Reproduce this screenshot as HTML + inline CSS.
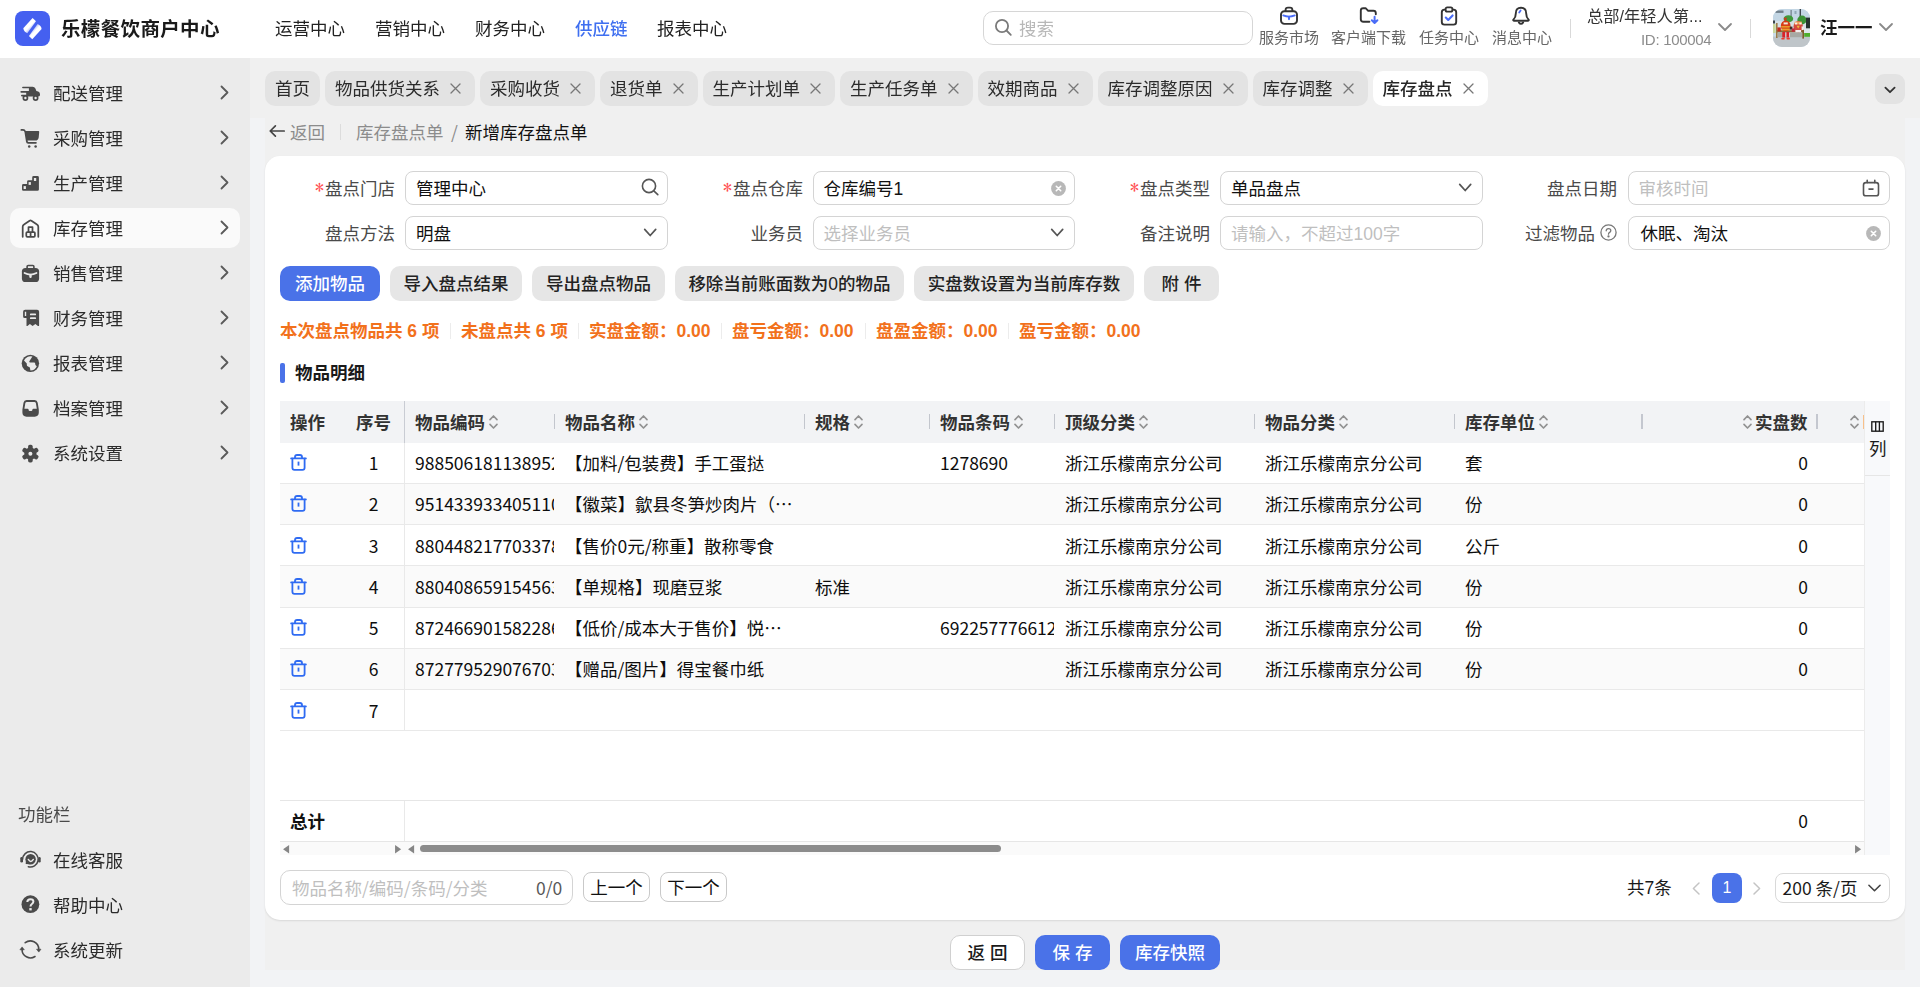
<!DOCTYPE html>
<html lang="zh-CN">
<head>
<meta charset="utf-8">
<title>乐檬餐饮商户中心</title>
<style>
*{box-sizing:border-box;margin:0;padding:0}
html,body{width:1920px;height:987px;overflow:hidden}
body{position:relative;background:#f2f3f5;font-family:"Liberation Sans","Noto Sans CJK SC",sans-serif;font-size:17.5px;color:#1f1f1f;line-height:1}
.a{position:absolute;white-space:nowrap}
.n{font-family:"Noto Sans CJK SC","Liberation Sans",sans-serif}
svg{display:block;overflow:visible;position:absolute}
/* header */
#hdbg{position:absolute;left:0;top:0;width:1920px;height:58px;background:#fff}
#hd{position:absolute;left:0;top:0;width:1920px;height:58px;will-change:transform}
#logo{position:absolute;left:15px;top:11px;width:35px;height:35px;border-radius:8px;background:#4560f0;overflow:hidden}
#title{position:absolute;left:61px;top:15px;font-size:19.5px;letter-spacing:.35px;line-height:26px;font-weight:700;color:#1a1a1a;white-space:nowrap;font-family:"Noto Sans CJK SC",sans-serif}
.nav{position:absolute;top:16px;line-height:26px;font-size:17.5px;color:#222;white-space:nowrap}
.nav.on{color:#3f6ff0;font-weight:500}
#srch{position:absolute;left:983px;top:11px;width:270px;height:34px;border:1px solid #d6d6d6;border-radius:10px;background:#fff}
.hl{position:absolute;top:29px;font-size:15px;line-height:18px;color:#666;white-space:nowrap}
.vd{position:absolute;width:1px;background:#d9d9d9}
/* sidebar */
#sbbg{position:absolute;left:0;top:58px;width:250px;height:929px;background:#ebebeb}
#sb{position:absolute;left:0;top:58px;width:250px;height:929px;will-change:transform}
#tabs{position:absolute;left:0;top:0;width:1920px;height:110px;will-change:transform}
.mi{position:absolute;left:10px;width:230px;height:40px;border-radius:10px}
.mi.on{background:#fafafa}
.mi .t{position:absolute;left:43px;top:8px;line-height:26px;font-size:17.5px;color:#2b2b2b;white-space:nowrap}
.mi svg.ic{left:10px;top:9px;width:22px;height:22px}
.mi svg.ch{left:209.5px;top:12px;width:9px;height:15px}
/* main */
#main{position:absolute;left:250px;top:58px;width:1670px;height:60px;background:#f0f0f0}
#main2{position:absolute;left:265px;top:117.5px;width:1640px;height:852.5px;background:#f0f0f0}
.tab{position:absolute;top:71px;height:35px;border-radius:10px;background:#e3e3e3;color:#2b2b2b;line-height:37px;padding-left:10px;white-space:nowrap;font-size:17.5px}
.tab.on{background:#fff;color:#262626;font-weight:500}
.tab svg{top:12px;width:11px;height:11px}
#panel{position:absolute;left:265px;top:155.6px;width:1640px;height:764.6px;background:#fff;border-radius:15px;box-shadow:0 1px 2px rgba(0,0,0,.1)}
.lb{position:absolute;text-align:right;width:130px;line-height:26px;color:#4a4a4a;font-size:17.5px;white-space:nowrap}
.lb i{font-style:normal;color:#ff4d4f;font-family:"IPAGothic","Liberation Sans",sans-serif;font-size:18px;display:inline-block;width:10.5px;line-height:20px;vertical-align:top;position:relative;top:1px;left:-1px}
.ip{position:absolute;width:262.5px;height:34px;border:1px solid #d4d4d4;border-radius:8px;background:#fff;line-height:34px;padding-left:10px;font-size:17.5px;color:#111;white-space:nowrap}
.ip.ph{color:#bfbfbf}
.btn{position:absolute;top:266px;height:35px;border-radius:10px;background:#e6e6e6;color:#222;font-weight:500;line-height:37px;text-align:center;font-size:17.5px;white-space:nowrap}
.btn.p{background:#4a72e8;color:#fff}
.st{position:absolute;top:318px;line-height:26px;font-weight:700;color:#f2711c;font-size:17.5px;white-space:nowrap}
/* table */
.th{position:absolute;top:401px;height:42px;line-height:42px;font-weight:700;color:#333;font-size:17.5px;white-space:nowrap;font-family:"Noto Sans CJK SC","Liberation Sans",sans-serif}
.rs{position:absolute;top:414px;width:2px;height:15px;background:#c4c7cf}
.row{position:absolute;left:280px;width:1584px;height:41px;border-bottom:1px solid #e9e9e9}
.row.ev{background:#fafafa}
.td{position:absolute;height:26px;line-height:26px;font-size:17.5px;color:#0d0d0d;white-space:nowrap;overflow:hidden;font-family:"Noto Sans CJK SC","Liberation Sans",sans-serif}
</style>
</head>
<body>
<div id="hdbg"></div><div id="hd">
<div id="logo"><svg viewBox="0 0 35 35" style="left:0;top:0;width:35px;height:35px"><defs><linearGradient id="lgA" gradientUnits="userSpaceOnUse" x1="11" y1="15" x2="16" y2="19.6"><stop offset=".45" stop-color="#fff"/><stop offset="1" stop-color="#fff" stop-opacity=".45"/></linearGradient><linearGradient id="lgB" gradientUnits="userSpaceOnUse" x1="24" y1="20.2" x2="19" y2="15.6"><stop offset=".45" stop-color="#fff"/><stop offset="1" stop-color="#fff" stop-opacity=".45"/></linearGradient></defs><path d="M17.6 6.9 L21 10.3 L12.3 22.2 Q8.7 20.6 8.3 17.3 Z" fill="url(#lgA)"/><path d="M17.3 28.3 L13.9 24.9 L22.6 13 Q26.2 14.6 26.6 17.9 Z" fill="url(#lgB)"/></svg></div>
<div id="title">乐檬餐饮商户中心</div>
<div class="nav" style="left:275px">运营中心</div>
<div class="nav" style="left:375px">营销中心</div>
<div class="nav" style="left:475px">财务中心</div>
<div class="nav on" style="left:575px">供应链</div>
<div class="nav" style="left:657px">报表中心</div>
<div id="srch"><svg viewBox="0 0 18 18" style="left:11px;top:7px;width:18px;height:18px" fill="none" stroke="#7a7a7a" stroke-width="1.8" stroke-linecap="round"><circle cx="7" cy="7" r="6.1"/><path d="M11.5 11.5 L15.8 15.9"/></svg><div class="a" style="left:35px;top:4px;line-height:26px;color:#b8b8b8">搜索</div></div>
<svg viewBox="0 0 20 20" style="left:1279px;top:6px;width:20px;height:20px" fill="none" stroke="#333" stroke-width="1.9" stroke-linejoin="round"><path d="M6.6 5.2 V4 Q6.6 1.6 9 1.6 H11 Q13.4 1.6 13.4 4 V5.2"/><rect x="2" y="5.2" width="16" height="12.7" rx="3.4"/><path d="M4.2 9.4 Q10 11.7 15.8 9.4" stroke="#4a6cf7" stroke-width="1.7" stroke-linecap="round"/><path d="M10 10.8 V13.1" stroke="#4a6cf7" stroke-width="2.1" stroke-linecap="round"/></svg>
<div class="hl" style="left:1259px">服务市场</div>
<svg viewBox="0 0 20 20" style="left:1359px;top:6px;width:20px;height:20px" fill="none" stroke="#333" stroke-width="1.9" stroke-linejoin="round" stroke-linecap="round"><path d="M10.4 15.8 H4.4 Q1.8 15.8 1.8 13.2 V4.6 Q1.8 2.2 4.2 2.2 H6.6 L9.2 4.8 H14.4 Q16.8 4.8 16.8 7.2 V8.2"/><path d="M15.6 10.8 V16.6 M12.8 14.2 L15.6 17 L18.4 14.2" stroke="#4a6cf7" stroke-width="2"/></svg>
<div class="hl" style="left:1331px">客户端下载</div>
<svg viewBox="0 0 20 20" style="left:1439px;top:6px;width:20px;height:20px" fill="none" stroke="#333" stroke-width="1.9" stroke-linejoin="round" stroke-linecap="round"><rect x="2.8" y="3.6" width="14.4" height="15" rx="2.6"/><rect x="6.6" y="1.4" width="6.8" height="4.2" rx="1.6" fill="#fff"/><path d="M6.8 11.6 L9.2 14 L13.6 9.4" stroke="#4a6cf7" stroke-width="2.1"/></svg>
<div class="hl" style="left:1419px">任务中心</div>
<svg viewBox="0 0 20 20" style="left:1511px;top:6px;width:20px;height:20px" fill="none" stroke="#333" stroke-width="1.9" stroke-linejoin="round" stroke-linecap="round"><path d="M10 1.8 Q15.2 1.8 15.2 7.4 Q15.2 11.4 17.6 13.6 Q18.2 14.6 17 14.8 H3 Q1.8 14.6 2.4 13.6 Q4.8 11.4 4.8 7.4 Q4.8 1.8 10 1.8Z"/><path d="M7.8 16.4 Q10 19.4 12.2 16.4"/><path d="M9.6 4.4 L8.2 6.6" stroke="#4a6cf7" stroke-width="1.8"/></svg>
<div class="hl" style="left:1492px">消息中心</div>
<div class="vd" style="left:1570px;top:19px;height:19px"></div>
<div class="a" style="left:1587px;top:6px;font-size:16.25px;line-height:20px;color:#333">总部/年轻人第...</div>
<div class="a" style="left:1641px;top:31px;font-size:15px;line-height:18px;color:#8c8c8c;letter-spacing:-.3px">ID: 100004</div>
<svg viewBox="0 0 14 8" style="left:1718px;top:23px;width:14px;height:8px" fill="none" stroke="#8a8a8a" stroke-width="1.8" stroke-linecap="round" stroke-linejoin="round"><path d="M1 1 L7 7 L13 1"/></svg>
<div class="vd" style="left:1750px;top:19px;height:19px"></div>
<svg viewBox="0 0 37 38" style="left:1773px;top:9px;width:37px;height:38px"><defs><clipPath id="av"><rect width="37" height="38" rx="9"/></clipPath><filter id="bl" x="-5%" y="-5%" width="110%" height="110%"><feGaussianBlur stdDeviation=".45"/></filter></defs><g clip-path="url(#av)"><rect width="37" height="38" fill="#c9dbe6"/><g filter="url(#bl)"><rect y="0" width="37" height="14" fill="#c3d6e4"/><rect x="0" y="12" width="37" height="10" fill="#d5e0e6"/><rect x="2.5" y="1.5" width="8" height="2.4" fill="#6f7f8a"/><rect x="17.6" y="1" width="1" height="7" fill="#5d6a72"/><rect x="26.6" y="0" width="1.4" height="8" fill="#3f4a50"/><rect x="21.5" y="2" width="2" height="3" fill="#8fa7b5"/><ellipse cx="15.4" cy="9.8" rx="4.8" ry="3.6" fill="#3f9a3a"/><ellipse cx="29" cy="11" rx="4.7" ry="4.4" fill="#3a9236"/><rect x="33" y="8.6" width="4" height="11" fill="#26302f"/><rect x="0" y="11.5" width="2" height="3" fill="#3a4448"/><rect x="0" y="15" width="2.6" height="9" fill="#c9d79a"/><rect x="0" y="27.6" width="37" height="10.4" fill="#bfc5c9"/><rect x="31.2" y="24" width="5.8" height="3.8" fill="#4fae2c"/><rect x="31" y="19.5" width="6" height="4.5" fill="#dfe6ea"/><rect x="3" y="21.2" width="28" height="2.2" fill="#8a6a3a"/><rect x="3" y="14" width="1.6" height="15" fill="#9a7a46"/><rect x="29.3" y="20" width="1.7" height="9.6" fill="#7d5c2c"/><rect x="5" y="23.6" width="24" height="4.6" fill="#a7a9a4"/><rect x="12.4" y="23.8" width="4.6" height="4" fill="#e8ebee"/><ellipse cx="12.7" cy="17" rx="4.9" ry="5.6" fill="#d63a16"/><rect x="8.2" y="17" width="9" height="1.6" fill="#e89a2a"/><rect x="8.6" y="19.6" width="8.2" height="1.8" fill="#e8a02e"/><rect x="10.6" y="13.4" width="4.2" height="2" fill="#f3e6d6"/><path d="M11.4 8.6 L12.4 11.6 L13.4 8.6" stroke="#d8321a" stroke-width="1.2" fill="none"/><rect x="4.4" y="18.4" width="3.4" height="4" fill="#c22a1c"/><rect x="16.8" y="17.6" width="2.6" height="3" fill="#3a2a2a"/><rect x="9.3" y="23" width="2.8" height="5.6" fill="#d8242a"/><rect x="13.4" y="23" width="2.8" height="5.6" fill="#d8242a"/><rect x="8.2" y="29" width="3.6" height="1.6" rx=".8" fill="#f0382a"/><rect x="13.4" y="29" width="3.6" height="1.6" rx=".8" fill="#f0382a"/><ellipse cx="25.2" cy="17.6" rx="4.7" ry="5.6" fill="#d4483e"/><rect x="21.6" y="12.6" width="7.2" height="2.8" fill="#f0a45a"/><rect x="22" y="13.6" width="2.2" height="1.8" fill="#f7f0ea"/><rect x="26.4" y="13.6" width="2.2" height="1.8" fill="#f7f0ea"/><path d="M23.6 16.8 L25.2 19.4 L26.8 16.8Z" fill="#e8b83a"/><rect x="22.4" y="21" width="5.6" height="2.2" fill="#f3eeee"/><rect x="18.8" y="19.4" width="3" height="3.4" fill="#c4283a"/><rect x="28.6" y="17.4" width="2.2" height="3.6" fill="#f0ece8"/></g></g></svg>
<div class="a" style="left:1820px;top:15px;line-height:26px;font-weight:700;color:#1a1a1a;font-size:17.5px">汪一一</div>
<svg viewBox="0 0 14 8" style="left:1879px;top:23px;width:14px;height:8px" fill="none" stroke="#8a8a8a" stroke-width="1.8" stroke-linecap="round" stroke-linejoin="round"><path d="M1 1 L7 7 L13 1"/></svg>
</div>
<div id="sbbg"></div><div id="sb">
<div class="mi" style="top:15px"><svg class="ic" viewBox="0 0 22 22"><path fill="#4a4a4a" d="M2.9 4.7 H12.6 Q14.6 4.7 15.4 6.6 L16.4 9 L18.2 9.6 Q20 10.3 20 12.2 V13 Q20 14.4 18.6 14.4 H1.8 Q1 14.4 1 13.6 Q1 12.8 1.8 12.8 H6.2 V10.7 H1.2 Q.4 10.7 .4 9.85 Q.4 9 1.2 9 H8.9 V6.3 H2.9 Q2.1 6.3 2.1 5.5 Q2.1 4.7 2.9 4.7Z"/><circle cx="5.4" cy="16" r="2.05" fill="#ebebeb" stroke="#4a4a4a" stroke-width="1.7"/><circle cx="15.6" cy="16" r="2.05" fill="#ebebeb" stroke="#4a4a4a" stroke-width="1.7"/></svg><div class="t">配送管理</div><svg class="ch" viewBox="0 0 9 15" fill="none" stroke="#5a5a5a" stroke-width="1.8" stroke-linecap="round" stroke-linejoin="round"><path d="M1.5 1.5 L7.5 7.5 L1.5 13.5"/></svg></div>
<div class="mi" style="top:60px"><svg class="ic" viewBox="0 0 22 22" fill="#4a4a4a"><path d="M1.3 2.1 H3 Q5.2 2.1 5.8 4.1 H18.4 Q19.3 4.1 19.2 5 L18.7 10.4 Q18.3 13.5 15.2 13.5 H7.6 L7.7 14.2 Q7.8 15 8.6 15 H16 Q16.8 15 16.8 15.85 Q16.8 16.7 16 16.7 H8.2 Q6.3 16.7 6 14.8 L4.5 5.2 Q4.3 3.8 2.9 3.8 H1.3 Q.5 3.8 .5 2.95 Q.5 2.1 1.3 2.1Z"/><circle cx="9.2" cy="19.6" r="1.25"/><circle cx="15.6" cy="19.6" r="1.25"/></svg><div class="t">采购管理</div><svg class="ch" viewBox="0 0 9 15" fill="none" stroke="#5a5a5a" stroke-width="1.8" stroke-linecap="round" stroke-linejoin="round"><path d="M1.5 1.5 L7.5 7.5 L1.5 13.5"/></svg></div>
<div class="mi" style="top:105px"><svg class="ic" viewBox="0 0 22 22"><path fill="#4a4a4a" d="M13.6 4 H17.5 Q18.9 4 18.9 5.4 V17.4 Q18.9 18.8 17.5 18.8 H3.4 Q2 18.8 2 17.4 V13.5 Q2 12.1 3.4 12.1 H7.1 V9.6 Q7.1 8.2 8.5 8.2 H12.2 V5.4 Q12.2 4 13.6 4Z"/><rect x="13.9" y="6" width="2.3" height="3" fill="#ebebeb"/><rect x="8.6" y="10.1" width="2.3" height="2.8" fill="#ebebeb"/><rect x="3.6" y="14.1" width="2.3" height="2.9" fill="#ebebeb"/></svg><div class="t">生产管理</div><svg class="ch" viewBox="0 0 9 15" fill="none" stroke="#5a5a5a" stroke-width="1.8" stroke-linecap="round" stroke-linejoin="round"><path d="M1.5 1.5 L7.5 7.5 L1.5 13.5"/></svg></div>
<div class="mi on" style="top:150px"><svg class="ic" viewBox="0 0 22 22" fill="none" stroke="#4a4a4a" stroke-width="1.75" stroke-linejoin="round" stroke-linecap="round"><path d="M2.7 19.8 V9.8 Q2.7 8.2 4 7.4 L9.6 3.7 Q10.5 3.1 11.4 3.7 L17 7.4 Q18.3 8.2 18.3 9.8 V19.8"/><rect x="6.3" y="15.1" width="8.6" height="4.7" rx="1"/><path d="M10.6 15.1 V19.8 M8.5 15.1 V10 H12.5 V15.1" stroke-linecap="butt"/></svg><div class="t">库存管理</div><svg class="ch" viewBox="0 0 9 15" fill="none" stroke="#5a5a5a" stroke-width="1.8" stroke-linecap="round" stroke-linejoin="round"><path d="M1.5 1.5 L7.5 7.5 L1.5 13.5"/></svg></div>
<div class="mi" style="top:195px"><svg class="ic" viewBox="0 0 22 22"><rect x="1.9" y="6" width="17.2" height="14" rx="3.6" fill="#4a4a4a"/><path d="M7.1 6.4 V4.6 Q7.1 3.5 8.2 3.5 H12.8 Q13.9 3.5 13.9 4.6 V6.4" fill="none" stroke="#4a4a4a" stroke-width="1.6"/><path d="M4.5 11 Q10.5 14.2 16.5 11" fill="none" stroke="#ebebeb" stroke-width="1.7" stroke-linecap="round"/><path d="M10.5 13 V14.8" fill="none" stroke="#ebebeb" stroke-width="2.4" stroke-linecap="round"/></svg><div class="t">销售管理</div><svg class="ch" viewBox="0 0 9 15" fill="none" stroke="#5a5a5a" stroke-width="1.8" stroke-linecap="round" stroke-linejoin="round"><path d="M1.5 1.5 L7.5 7.5 L1.5 13.5"/></svg></div>
<div class="mi" style="top:240px"><svg class="ic" viewBox="0 0 22 22"><path fill="#4a4a4a" fill-rule="evenodd" d="M5.1 2.8 H17.1 Q19.1 2.8 19.1 4.8 V18.4 Q19.1 19.2 18.3 19 L17.9 19 L15.4 17 L12.6 19 L9.9 17 L7.4 19 H6.5 V10.9 H4.6 Q3.1 10.9 3.1 9.4 V4.8 Q3.1 2.8 5.1 2.8Z M4.8 4.8 V9 H6.2 V4.8Z"/><path d="M10.8 7.4 H15.2 M10.8 11.2 H15.2" stroke="#ebebeb" stroke-width="1.8" stroke-linecap="round"/></svg><div class="t">财务管理</div><svg class="ch" viewBox="0 0 9 15" fill="none" stroke="#5a5a5a" stroke-width="1.8" stroke-linecap="round" stroke-linejoin="round"><path d="M1.5 1.5 L7.5 7.5 L1.5 13.5"/></svg></div>
<div class="mi" style="top:285px"><svg class="ic" viewBox="0 0 22 22"><circle cx="10.4" cy="11.35" r="8.7" fill="#4a4a4a"/><path fill="#ebebeb" d="M4.0 8.5 A7.1 7.1 0 0 1 12.4 4.5 L9.2 9.4 Q9.6 10.6 10.7 10.6 H14.2 Q15 10.6 15.2 11.6 L15.4 13 L16.8 14.2 A7.1 7.1 0 0 1 10.4 18.45 L9.9 15.5 L7.6 14.3 Q6.8 13.8 6.8 12.8 V11.5Z"/></svg><div class="t">报表管理</div><svg class="ch" viewBox="0 0 9 15" fill="none" stroke="#5a5a5a" stroke-width="1.8" stroke-linecap="round" stroke-linejoin="round"><path d="M1.5 1.5 L7.5 7.5 L1.5 13.5"/></svg></div>
<div class="mi" style="top:330px"><svg class="ic" viewBox="0 0 22 22"><path fill="#4a4a4a" fill-rule="evenodd" d="M6.6 3.1 H14.6 Q17.2 3.1 17.7 5.7 L18.7 12 Q18.8 12.6 18.8 13.2 V15.6 Q18.8 19.7 14.7 19.7 H6.5 Q2.4 19.7 2.4 15.6 V13.2 Q2.4 12.6 2.5 12 L3.5 5.7 Q4 3.1 6.6 3.1Z M6.9 4.9 Q5.5 4.9 5.3 6.3 L4.4 11.8 H7.6 Q8.6 11.8 8.6 12.8 Q8.6 14 9.8 14 H11.2 Q12.4 14 12.4 12.8 Q12.4 11.8 13.4 11.8 H16.8 L15.9 6.3 Q15.7 4.9 14.3 4.9Z"/></svg><div class="t">档案管理</div><svg class="ch" viewBox="0 0 9 15" fill="none" stroke="#5a5a5a" stroke-width="1.8" stroke-linecap="round" stroke-linejoin="round"><path d="M1.5 1.5 L7.5 7.5 L1.5 13.5"/></svg></div>
<div class="mi" style="top:375px"><svg class="ic" viewBox="0 0 22 22"><g fill="#4a4a4a" transform="translate(10.4 11.65)"><circle r="6.1"/><rect x="-2.3" y="-8.8" width="4.6" height="17.6" rx="1.7"/><rect x="-2.3" y="-8.8" width="4.6" height="17.6" rx="1.7" transform="rotate(60)"/><rect x="-2.3" y="-8.8" width="4.6" height="17.6" rx="1.7" transform="rotate(120)"/><circle r="2" fill="#ebebeb"/></g></svg><div class="t">系统设置</div><svg class="ch" viewBox="0 0 9 15" fill="none" stroke="#5a5a5a" stroke-width="1.8" stroke-linecap="round" stroke-linejoin="round"><path d="M1.5 1.5 L7.5 7.5 L1.5 13.5"/></svg></div>
<div class="a" style="left:18px;top:744px;line-height:26px;color:#4a4a4a;font-size:17.5px">功能栏</div>
<div class="mi" style="top:782px"><svg class="ic" viewBox="0 0 22 22"><path d="M2.65 10.35 A7.75 7.75 0 1 1 8.3 17.8" fill="none" stroke="#4a4a4a" stroke-width="1.5" stroke-linecap="round"/><rect x=".3" y="8" width="2.7" height="5.5" rx="1.3" fill="#4a4a4a"/><rect x="18.1" y="8" width="2.6" height="5.5" rx="1.3" fill="#4a4a4a"/><circle cx="10.6" cy="10.2" r="5.2" fill="#4a4a4a"/><path d="M5.7 14.9 L6 10.6 L10.4 15.2Z" fill="#4a4a4a"/><path d="M8.3 10.4 Q10.8 14.6 13.3 10.4" fill="none" stroke="#ebebeb" stroke-width="1.4" stroke-linecap="round"/></svg><div class="t">在线客服</div></div>
<div class="mi" style="top:827px"><svg class="ic" viewBox="0 0 22 22"><circle cx="10.4" cy="10.2" r="8.9" fill="#4a4a4a"/><path d="M7.3 8 Q7.5 5.2 10.4 5.2 Q13.4 5.2 13.4 7.6 Q13.4 9 11.9 10 Q10.5 11 10.5 12.5" fill="none" stroke="#ebebeb" stroke-width="2"/><rect x="9.3" y="14.1" width="2.4" height="2.3" fill="#ebebeb"/></svg><div class="t">帮助中心</div></div>
<div class="mi" style="top:872px"><svg class="ic" viewBox="0 0 22 22"><g fill="none" stroke="#4a4a4a" stroke-width="1.6" stroke-linecap="round"><path d="M5.2 3.7 A8.4 8.4 0 0 1 18.75 10.3"/><path d="M15 17.5 A8.4 8.4 0 0 1 2.05 10.4"/></g><path d="M16.5 10.2 H21 L18.8 13.1Z M-.1 10.8 H4.3 L2.1 7.9Z" fill="#4a4a4a" stroke="#4a4a4a" stroke-width=".6" stroke-linejoin="round"/></svg><div class="t">系统更新</div></div>
</div>
<div id="main"></div><div id="main2"></div>
<div id="tabs">
<div class="tab" style="left:265px;width:55px">首页</div>
<div class="tab" style="left:325px;width:150px">物品供货关系<svg viewBox="0 0 11 11" style="left:125px" fill="none" stroke="#777" stroke-width="1.3" stroke-linecap="round"><path d="M1 1 L10 10 M10 1 L1 10"/></svg></div>
<div class="tab" style="left:480px;width:115px">采购收货<svg viewBox="0 0 11 11" style="left:90px" fill="none" stroke="#777" stroke-width="1.3" stroke-linecap="round"><path d="M1 1 L10 10 M10 1 L1 10"/></svg></div>
<div class="tab" style="left:600px;width:97.5px">退货单<svg viewBox="0 0 11 11" style="left:72.5px" fill="none" stroke="#777" stroke-width="1.3" stroke-linecap="round"><path d="M1 1 L10 10 M10 1 L1 10"/></svg></div>
<div class="tab" style="left:702.5px;width:132.5px">生产计划单<svg viewBox="0 0 11 11" style="left:107.5px" fill="none" stroke="#777" stroke-width="1.3" stroke-linecap="round"><path d="M1 1 L10 10 M10 1 L1 10"/></svg></div>
<div class="tab" style="left:840px;width:132.5px">生产任务单<svg viewBox="0 0 11 11" style="left:107.5px" fill="none" stroke="#777" stroke-width="1.3" stroke-linecap="round"><path d="M1 1 L10 10 M10 1 L1 10"/></svg></div>
<div class="tab" style="left:977.5px;width:115px">效期商品<svg viewBox="0 0 11 11" style="left:90px" fill="none" stroke="#777" stroke-width="1.3" stroke-linecap="round"><path d="M1 1 L10 10 M10 1 L1 10"/></svg></div>
<div class="tab" style="left:1097.5px;width:150px">库存调整原因<svg viewBox="0 0 11 11" style="left:125px" fill="none" stroke="#777" stroke-width="1.3" stroke-linecap="round"><path d="M1 1 L10 10 M10 1 L1 10"/></svg></div>
<div class="tab" style="left:1252.5px;width:115px">库存调整<svg viewBox="0 0 11 11" style="left:90px" fill="none" stroke="#777" stroke-width="1.3" stroke-linecap="round"><path d="M1 1 L10 10 M10 1 L1 10"/></svg></div>
<div class="tab on" style="left:1372.5px;width:115px">库存盘点<svg viewBox="0 0 11 11" style="left:90px" fill="none" stroke="#777" stroke-width="1.3" stroke-linecap="round"><path d="M1 1 L10 10 M10 1 L1 10"/></svg></div>
<div class="a" style="left:1875px;top:74px;width:30px;height:30px;border-radius:9px;background:#e3e3e3"><svg viewBox="0 0 12 8" style="left:9px;top:12px;width:12px;height:8px" fill="none" stroke="#333" stroke-width="1.8" stroke-linecap="round" stroke-linejoin="round"><path d="M1.4 1.6 L6 6.2 L10.6 1.6"/></svg></div>
</div>
<svg viewBox="0 0 16 14" style="left:269px;top:124px;width:16px;height:14px" fill="none" stroke="#444" stroke-width="1.7" stroke-linecap="round" stroke-linejoin="round"><path d="M15.2 7 H1.4 M6.4 1.9 L1.2 7 L6.4 12.1"/></svg>
<div class="a n" style="left:290px;top:119px;line-height:26px;color:#8c8c8c">返回</div>
<div class="vd" style="left:340px;top:124px;height:16px;background:#dcdcdc"></div>
<div class="a n" style="left:356px;top:119px;line-height:26px;color:#8c8c8c">库存盘点单</div>
<div class="a n" style="left:451px;top:119px;line-height:26px;color:#8c8c8c">/</div>
<div class="a n" style="left:465px;top:119px;line-height:26px;color:#111">新增库存盘点单</div>
<div id="panel"></div>
<div class="lb" style="left:265px;top:176px"><i>*</i>盘点门店</div>
<div class="ip" style="left:405px;top:171px;width:262.5px">管理中心</div>
<svg viewBox="0 0 18 18" style="left:640.5px;top:178.4px;width:18px;height:18px" fill="none" stroke="#555" stroke-width="1.6" stroke-linecap="round"><circle cx="8" cy="8" r="6.6"/><path d="M12.8 12.8 L16.8 16.6"/></svg>
<div class="lb" style="left:265px;top:221px">盘点方法</div>
<div class="ip" style="left:405px;top:216px;width:262.5px">明盘</div>
<svg viewBox="0 0 14 9" style="left:642.8px;top:228.4px;width:14px;height:9px" fill="none" stroke="#555" stroke-width="1.7" stroke-linecap="round" stroke-linejoin="round"><path d="M1.7 1.4 L7.2 7.5 L12.7 1.4"/></svg>
<div class="lb" style="left:673px;top:176px"><i>*</i>盘点仓库</div>
<div class="ip" style="left:812.5px;top:171px;width:262.5px">仓库编号1</div>
<svg viewBox="0 0 15 15" style="left:1051px;top:180.9px;width:15px;height:15px"><circle cx="7.5" cy="7.5" r="7.4" fill="#b8b8b8"/><path d="M5.3 5.3 L9.7 9.7 M9.7 5.3 L5.3 9.7" stroke="#fff" stroke-width="1.6" stroke-linecap="round"/></svg>
<div class="lb" style="left:673px;top:221px">业务员</div>
<div class="ip ph" style="left:812.5px;top:216px;width:262.5px">选择业务员</div>
<svg viewBox="0 0 14 9" style="left:1050.3px;top:228.4px;width:14px;height:9px" fill="none" stroke="#555" stroke-width="1.7" stroke-linecap="round" stroke-linejoin="round"><path d="M1.7 1.4 L7.2 7.5 L12.7 1.4"/></svg>
<div class="lb" style="left:1080px;top:176px"><i>*</i>盘点类型</div>
<div class="ip" style="left:1220px;top:171px;width:262.5px">单品盘点</div>
<svg viewBox="0 0 14 9" style="left:1457.8px;top:183.4px;width:14px;height:9px" fill="none" stroke="#555" stroke-width="1.7" stroke-linecap="round" stroke-linejoin="round"><path d="M1.7 1.4 L7.2 7.5 L12.7 1.4"/></svg>
<div class="lb" style="left:1080px;top:221px">备注说明</div>
<div class="ip ph" style="left:1220px;top:216px;width:262.5px">请输入，不超过100字</div>
<div class="lb" style="left:1487px;top:176px">盘点日期</div>
<div class="ip ph" style="left:1627.5px;top:171px;width:262.5px">审核时间</div>
<svg viewBox="0 0 18 18" style="left:1861.6px;top:178.6px;width:18px;height:18px" fill="none" stroke="#555" stroke-width="1.6" stroke-linecap="round" stroke-linejoin="round"><rect x="1.5" y="3.6" width="15" height="13.2" rx="2.4"/><path d="M5.2 1.2 V3.6 M12.8 1.2 V3.6 M7 10.1 H11"/></svg>
<div class="lb" style="left:1465px;top:221px;width:130px">过滤物品</div>
<svg viewBox="0 0 17 17" style="left:1600px;top:224px;width:17px;height:17px" fill="none" stroke="#777" stroke-width="1.3" stroke-linecap="round"><circle cx="8.5" cy="8.5" r="7.6"/><path d="M6.2 6.8 Q6.2 4.6 8.5 4.6 Q10.8 4.6 10.8 6.6 Q10.8 7.8 9.6 8.4 Q8.5 9 8.5 10.2"/><circle cx="8.5" cy="12.4" r=".5" fill="#777"/></svg>
<div class="ip" style="left:1627.5px;top:216px;width:262.5px;padding-left:12px">休眠、淘汰</div>
<svg viewBox="0 0 15 15" style="left:1866px;top:225.9px;width:15px;height:15px"><circle cx="7.5" cy="7.5" r="7.4" fill="#b8b8b8"/><path d="M5.3 5.3 L9.7 9.7 M9.7 5.3 L5.3 9.7" stroke="#fff" stroke-width="1.6" stroke-linecap="round"/></svg>
<div class="btn p" style="left:280px;width:100px">添加物品</div>
<div class="btn" style="left:390px;width:132px">导入盘点结果</div>
<div class="btn" style="left:532px;width:133px">导出盘点物品</div>
<div class="btn" style="left:675px;width:229px">移除当前账面数为0的物品</div>
<div class="btn" style="left:914px;width:220px">实盘数设置为当前库存数</div>
<div class="btn" style="left:1144px;width:75px">附 件</div>
<div class="st" style="left:280px">本次盘点物品共 6 项</div>
<div class="st" style="left:461px">未盘点共 6 项</div>
<div class="st" style="left:589px">实盘金额：0.00</div>
<div class="st" style="left:732px">盘亏金额：0.00</div>
<div class="st" style="left:876px">盘盈金额：0.00</div>
<div class="st" style="left:1019px">盈亏金额：0.00</div>
<div class="vd" style="left:450px;top:323px;height:16px;background:#ececec"></div>
<div class="vd" style="left:578px;top:323px;height:16px;background:#ececec"></div>
<div class="vd" style="left:721px;top:323px;height:16px;background:#ececec"></div>
<div class="vd" style="left:865px;top:323px;height:16px;background:#ececec"></div>
<div class="vd" style="left:1008px;top:323px;height:16px;background:#ececec"></div>
<div class="a" style="left:280px;top:363px;width:5px;height:20px;border-radius:2px;background:#4a72e8"></div>
<div class="a" style="left:295px;top:360px;line-height:26px;font-weight:700;color:#1a1a1a">物品明细</div>
<div class="a" style="left:280px;top:401px;width:1584px;height:42px;background:#f2f3f5"></div>
<div class="th" style="left:290px">操作</div>
<div class="th" style="left:356px">序号</div>
<div class="th" style="left:415px">物品编码</div>
<svg viewBox="0 0 9 16" style="left:489px;top:414px;width:9px;height:16px" fill="none" stroke="#929292" stroke-width="1.65" stroke-linecap="round" stroke-linejoin="round"><path d="M1 5.6 L4.5 2 L8 5.6 M1 10.4 L4.5 14 L8 10.4"/></svg>
<div class="th" style="left:565px">物品名称</div>
<svg viewBox="0 0 9 16" style="left:639px;top:414px;width:9px;height:16px" fill="none" stroke="#929292" stroke-width="1.65" stroke-linecap="round" stroke-linejoin="round"><path d="M1 5.6 L4.5 2 L8 5.6 M1 10.4 L4.5 14 L8 10.4"/></svg>
<div class="th" style="left:815px">规格</div>
<svg viewBox="0 0 9 16" style="left:854px;top:414px;width:9px;height:16px" fill="none" stroke="#929292" stroke-width="1.65" stroke-linecap="round" stroke-linejoin="round"><path d="M1 5.6 L4.5 2 L8 5.6 M1 10.4 L4.5 14 L8 10.4"/></svg>
<div class="th" style="left:940px">物品条码</div>
<svg viewBox="0 0 9 16" style="left:1014px;top:414px;width:9px;height:16px" fill="none" stroke="#929292" stroke-width="1.65" stroke-linecap="round" stroke-linejoin="round"><path d="M1 5.6 L4.5 2 L8 5.6 M1 10.4 L4.5 14 L8 10.4"/></svg>
<div class="th" style="left:1065px">顶级分类</div>
<svg viewBox="0 0 9 16" style="left:1139px;top:414px;width:9px;height:16px" fill="none" stroke="#929292" stroke-width="1.65" stroke-linecap="round" stroke-linejoin="round"><path d="M1 5.6 L4.5 2 L8 5.6 M1 10.4 L4.5 14 L8 10.4"/></svg>
<div class="th" style="left:1265px">物品分类</div>
<svg viewBox="0 0 9 16" style="left:1339px;top:414px;width:9px;height:16px" fill="none" stroke="#929292" stroke-width="1.65" stroke-linecap="round" stroke-linejoin="round"><path d="M1 5.6 L4.5 2 L8 5.6 M1 10.4 L4.5 14 L8 10.4"/></svg>
<div class="th" style="left:1465px">库存单位</div>
<svg viewBox="0 0 9 16" style="left:1539px;top:414px;width:9px;height:16px" fill="none" stroke="#929292" stroke-width="1.65" stroke-linecap="round" stroke-linejoin="round"><path d="M1 5.6 L4.5 2 L8 5.6 M1 10.4 L4.5 14 L8 10.4"/></svg>
<div class="rs" style="left:554px;width:1px;background:#c3c6cd"></div>
<div class="rs" style="left:804px;width:1px;background:#c3c6cd"></div>
<div class="rs" style="left:929px;width:1px;background:#c3c6cd"></div>
<div class="rs" style="left:1054px;width:1px;background:#c3c6cd"></div>
<div class="rs" style="left:1254px;width:1px;background:#c3c6cd"></div>
<div class="rs" style="left:1454px;width:1px;background:#c3c6cd"></div>
<div class="rs" style="left:1641px"></div><div class="rs" style="left:1816px"></div>
<svg viewBox="0 0 9 16" style="left:1743px;top:414px;width:9px;height:16px" fill="none" stroke="#929292" stroke-width="1.65" stroke-linecap="round" stroke-linejoin="round"><path d="M1 5.6 L4.5 2 L8 5.6 M1 10.4 L4.5 14 L8 10.4"/></svg>
<div class="th" style="left:1755px">实盘数</div>
<svg viewBox="0 0 9 16" style="left:1850px;top:414px;width:9px;height:16px" fill="none" stroke="#929292" stroke-width="1.65" stroke-linecap="round" stroke-linejoin="round"><path d="M1 5.6 L4.5 2 L8 5.6 M1 10.4 L4.5 14 L8 10.4"/></svg>
<div class="a" style="left:1863px;top:415px;width:1px;height:14px;background:#f8c08a"></div>
<div class="row" style="top:443px;height:41px">
<svg viewBox="0 0 17 17" style="left:10px;top:11px;width:17px;height:17px" fill="none" stroke="#2f6bf2" stroke-width="1.8" stroke-linejoin="round" stroke-linecap="round"><path d="M1.1 4.4 H15.9 M5 4.3 V3.1 Q5 1 7.1 1 H9.9 Q12 1 12 3.1 V4.3"/><path d="M2.4 4.6 V13.8 Q2.4 15.9 4.5 15.9 H12.5 Q14.6 15.9 14.6 13.8 V4.6"/><path d="M8.5 7.6 V11.6" stroke-linecap="butt"/></svg>
<div class="td" style="top:7px;left:63px;width:61px;text-align:center">1</div>
<div class="td" style="top:7px;left:135px;width:139px;text-overflow:clip">988506181138952</div>
<div class="td" style="top:7px;left:285px;width:238px">【加料/包装费】手工蛋挞</div>
<div class="td" style="top:7px;left:660px;width:114px">1278690</div>
<div class="td" style="top:7px;left:785px;width:180px">浙江乐檬南京分公司</div>
<div class="td" style="top:7px;left:985px;width:180px">浙江乐檬南京分公司</div>
<div class="td" style="top:7px;left:1185px;width:160px">套</div>
<div class="td" style="top:7px;left:1401px;width:127px;text-align:right">0</div>
</div>
<div class="row ev" style="top:484px;height:41px">
<svg viewBox="0 0 17 17" style="left:10px;top:11px;width:17px;height:17px" fill="none" stroke="#2f6bf2" stroke-width="1.8" stroke-linejoin="round" stroke-linecap="round"><path d="M1.1 4.4 H15.9 M5 4.3 V3.1 Q5 1 7.1 1 H9.9 Q12 1 12 3.1 V4.3"/><path d="M2.4 4.6 V13.8 Q2.4 15.9 4.5 15.9 H12.5 Q14.6 15.9 14.6 13.8 V4.6"/><path d="M8.5 7.6 V11.6" stroke-linecap="butt"/></svg>
<div class="td" style="top:7px;left:63px;width:61px;text-align:center">2</div>
<div class="td" style="top:7px;left:135px;width:139px;text-overflow:clip">951433933405110</div>
<div class="td" style="top:7px;left:285px;width:238px">【徽菜】歙县冬笋炒肉片（…</div>
<div class="td" style="top:7px;left:785px;width:180px">浙江乐檬南京分公司</div>
<div class="td" style="top:7px;left:985px;width:180px">浙江乐檬南京分公司</div>
<div class="td" style="top:7px;left:1185px;width:160px">份</div>
<div class="td" style="top:7px;left:1401px;width:127px;text-align:right">0</div>
</div>
<div class="row" style="top:525px;height:41px">
<svg viewBox="0 0 17 17" style="left:10px;top:12px;width:17px;height:17px" fill="none" stroke="#2f6bf2" stroke-width="1.8" stroke-linejoin="round" stroke-linecap="round"><path d="M1.1 4.4 H15.9 M5 4.3 V3.1 Q5 1 7.1 1 H9.9 Q12 1 12 3.1 V4.3"/><path d="M2.4 4.6 V13.8 Q2.4 15.9 4.5 15.9 H12.5 Q14.6 15.9 14.6 13.8 V4.6"/><path d="M8.5 7.6 V11.6" stroke-linecap="butt"/></svg>
<div class="td" style="top:8px;left:63px;width:61px;text-align:center">3</div>
<div class="td" style="top:8px;left:135px;width:139px;text-overflow:clip">880448217703378</div>
<div class="td" style="top:8px;left:285px;width:238px">【售价0元/称重】散称零食</div>
<div class="td" style="top:8px;left:785px;width:180px">浙江乐檬南京分公司</div>
<div class="td" style="top:8px;left:985px;width:180px">浙江乐檬南京分公司</div>
<div class="td" style="top:8px;left:1185px;width:160px">公斤</div>
<div class="td" style="top:8px;left:1401px;width:127px;text-align:right">0</div>
</div>
<div class="row ev" style="top:566px;height:42px">
<svg viewBox="0 0 17 17" style="left:10px;top:12px;width:17px;height:17px" fill="none" stroke="#2f6bf2" stroke-width="1.8" stroke-linejoin="round" stroke-linecap="round"><path d="M1.1 4.4 H15.9 M5 4.3 V3.1 Q5 1 7.1 1 H9.9 Q12 1 12 3.1 V4.3"/><path d="M2.4 4.6 V13.8 Q2.4 15.9 4.5 15.9 H12.5 Q14.6 15.9 14.6 13.8 V4.6"/><path d="M8.5 7.6 V11.6" stroke-linecap="butt"/></svg>
<div class="td" style="top:8px;left:63px;width:61px;text-align:center">4</div>
<div class="td" style="top:8px;left:135px;width:139px;text-overflow:clip">880408659154563</div>
<div class="td" style="top:8px;left:285px;width:238px">【单规格】现磨豆浆</div>
<div class="td" style="top:8px;left:535px;width:110px">标准</div>
<div class="td" style="top:8px;left:785px;width:180px">浙江乐檬南京分公司</div>
<div class="td" style="top:8px;left:985px;width:180px">浙江乐檬南京分公司</div>
<div class="td" style="top:8px;left:1185px;width:160px">份</div>
<div class="td" style="top:8px;left:1401px;width:127px;text-align:right">0</div>
</div>
<div class="row" style="top:608px;height:41px">
<svg viewBox="0 0 17 17" style="left:10px;top:11px;width:17px;height:17px" fill="none" stroke="#2f6bf2" stroke-width="1.8" stroke-linejoin="round" stroke-linecap="round"><path d="M1.1 4.4 H15.9 M5 4.3 V3.1 Q5 1 7.1 1 H9.9 Q12 1 12 3.1 V4.3"/><path d="M2.4 4.6 V13.8 Q2.4 15.9 4.5 15.9 H12.5 Q14.6 15.9 14.6 13.8 V4.6"/><path d="M8.5 7.6 V11.6" stroke-linecap="butt"/></svg>
<div class="td" style="top:7px;left:63px;width:61px;text-align:center">5</div>
<div class="td" style="top:7px;left:135px;width:139px;text-overflow:clip">872466901582286</div>
<div class="td" style="top:7px;left:285px;width:238px">【低价/成本大于售价】悦…</div>
<div class="td" style="top:7px;left:660px;width:114px">6922577766124</div>
<div class="td" style="top:7px;left:785px;width:180px">浙江乐檬南京分公司</div>
<div class="td" style="top:7px;left:985px;width:180px">浙江乐檬南京分公司</div>
<div class="td" style="top:7px;left:1185px;width:160px">份</div>
<div class="td" style="top:7px;left:1401px;width:127px;text-align:right">0</div>
</div>
<div class="row ev" style="top:649px;height:41px">
<svg viewBox="0 0 17 17" style="left:10px;top:11px;width:17px;height:17px" fill="none" stroke="#2f6bf2" stroke-width="1.8" stroke-linejoin="round" stroke-linecap="round"><path d="M1.1 4.4 H15.9 M5 4.3 V3.1 Q5 1 7.1 1 H9.9 Q12 1 12 3.1 V4.3"/><path d="M2.4 4.6 V13.8 Q2.4 15.9 4.5 15.9 H12.5 Q14.6 15.9 14.6 13.8 V4.6"/><path d="M8.5 7.6 V11.6" stroke-linecap="butt"/></svg>
<div class="td" style="top:7px;left:63px;width:61px;text-align:center">6</div>
<div class="td" style="top:7px;left:135px;width:139px;text-overflow:clip">872779529076703</div>
<div class="td" style="top:7px;left:285px;width:238px">【赠品/图片】得宝餐巾纸</div>
<div class="td" style="top:7px;left:785px;width:180px">浙江乐檬南京分公司</div>
<div class="td" style="top:7px;left:985px;width:180px">浙江乐檬南京分公司</div>
<div class="td" style="top:7px;left:1185px;width:160px">份</div>
<div class="td" style="top:7px;left:1401px;width:127px;text-align:right">0</div>
</div>
<div class="row" style="top:690px;height:41px">
<svg viewBox="0 0 17 17" style="left:10px;top:12px;width:17px;height:17px" fill="none" stroke="#2f6bf2" stroke-width="1.8" stroke-linejoin="round" stroke-linecap="round"><path d="M1.1 4.4 H15.9 M5 4.3 V3.1 Q5 1 7.1 1 H9.9 Q12 1 12 3.1 V4.3"/><path d="M2.4 4.6 V13.8 Q2.4 15.9 4.5 15.9 H12.5 Q14.6 15.9 14.6 13.8 V4.6"/><path d="M8.5 7.6 V11.6" stroke-linecap="butt"/></svg>
<div class="td" style="top:8px;left:63px;width:61px;text-align:center">7</div>
</div>
<div class="a" style="left:404px;top:401px;width:1px;height:42px;background:#c9ccd3"></div>
<div class="a" style="left:404px;top:443px;width:1px;height:288px;background:#e9e9e9"></div><div class="a" style="left:404px;top:800px;width:1px;height:55px;background:#e9e9e9"></div>
<div class="a" style="left:280px;top:800px;width:1584px;height:1px;background:#e6e6e6"></div>
<div class="a" style="left:280px;top:841px;width:1584px;height:1px;background:#e6e6e6"></div>
<div class="a n" style="left:290px;top:808px;line-height:26px;font-weight:700;color:#111">总计</div>
<div class="a n" style="left:1681px;top:808px;width:127px;text-align:right;line-height:26px;color:#0d0d0d">0</div>
<div class="a" style="left:280px;top:842px;width:1584px;height:13px;background:#fafafa"></div>
<svg viewBox="0 0 6.5 9" style="left:283px;top:844.5px;width:6.2px;height:8.4px"><polygon points="6.5,0 6.5,9 0,4.5" fill="#858585"/></svg>
<svg viewBox="0 0 6.5 9" style="left:394.5px;top:844.5px;width:6.2px;height:8.4px"><polygon points="0,0 0,9 6.5,4.5" fill="#858585"/></svg>
<svg viewBox="0 0 6.5 9" style="left:408px;top:844.5px;width:6.2px;height:8.4px"><polygon points="6.5,0 6.5,9 0,4.5" fill="#858585"/></svg>
<svg viewBox="0 0 6.5 9" style="left:1854.5px;top:844.5px;width:6.2px;height:8.4px"><polygon points="0,0 0,9 6.5,4.5" fill="#858585"/></svg>
<div class="a" style="left:420px;top:845px;width:581px;height:7px;border-radius:4px;background:#8c8c8c"></div>
<div class="a" style="left:1864px;top:401px;width:1px;height:454px;background:#ececec"></div>
<div class="a" style="left:1865px;top:401px;width:25px;height:454px;background:#f8f9fb"></div>
<svg viewBox="0 0 13 11" style="left:1871px;top:421px;width:13px;height:11px" fill="none" stroke="#1a1a1a" stroke-width="1.35"><rect x=".8" y=".8" width="11.4" height="9.4"/><path d="M4.7 .8 V10.2 M8.4 .8 V10.2"/></svg>
<div class="a" style="left:1869px;top:436px;line-height:26px;color:#1a1a1a;font-size:17.5px">列</div>
<div class="a" style="left:1865px;top:475px;width:25px;height:1px;background:#e6e6e6"></div>
<div class="ip ph n" style="left:280px;top:870px;width:293px;height:35px;border-radius:10px;line-height:33px;padding-left:11px;color:#bfbfbf">物品名称/编码/条码/分类<span style="position:absolute;left:255px;top:0;color:#595959">0/0</span></div>
<div class="a" style="left:583px;top:872px;width:67px;height:30px;border:1px solid #c9c9c9;border-radius:8px;background:#fff;line-height:30px;text-align:center;color:#111">上一个</div>
<div class="a" style="left:660px;top:872px;width:67px;height:30px;border:1px solid #c9c9c9;border-radius:8px;background:#fff;line-height:30px;text-align:center;color:#111">下一个</div>
<div class="a" style="left:1627px;top:875px;line-height:26px;color:#1a1a1a">共7条</div>
<svg viewBox="0 0 8 13" style="left:1692px;top:882px;width:8px;height:13px" fill="none" stroke="#c4c4c4" stroke-width="1.5" stroke-linecap="round" stroke-linejoin="round"><path d="M7 1 L1.4 6.5 L7 12"/></svg>
<div class="a" style="left:1712px;top:873px;width:30px;height:30px;border-radius:8px;background:#4a72e8;color:#fff;line-height:30px;text-align:center;font-weight:500;font-size:16px">1</div>
<svg viewBox="0 0 8 13" style="left:1753px;top:882px;width:8px;height:13px" fill="none" stroke="#c4c4c4" stroke-width="1.5" stroke-linecap="round" stroke-linejoin="round"><path d="M1 1 L6.6 6.5 L1 12"/></svg>
<div class="a" style="left:1774.5px;top:873px;width:115.5px;height:30px;border:1px solid #d9d9d9;border-radius:8px;background:#fff;line-height:28px;padding-left:7px;color:#1a1a1a"><span class="n">200 条/页</span><svg viewBox="0 0 14 8" style="left:92px;top:10px;width:13px;height:8px" fill="none" stroke="#444" stroke-width="1.7" stroke-linecap="round" stroke-linejoin="round"><path d="M1 1 L7 7 L13 1"/></svg></div>
<div class="a" style="left:950px;top:935px;width:75px;height:35px;border:1px solid #d0d0d0;border-radius:10px;background:#fff;line-height:35px;text-align:center;color:#1a1a1a;font-weight:500">返 回</div>
<div class="a" style="left:1035px;top:935px;width:75px;height:35px;border-radius:10px;background:#4a72e8;line-height:37px;text-align:center;color:#fff;font-weight:500">保 存</div>
<div class="a" style="left:1120px;top:935px;width:100px;height:35px;border-radius:10px;background:#4a72e8;line-height:37px;text-align:center;color:#fff;font-weight:500">库存快照</div>
</body>
</html>
